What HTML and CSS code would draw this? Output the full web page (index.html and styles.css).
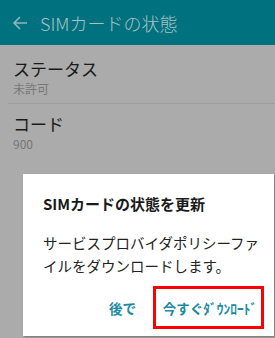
FILE: index.html
```html
<!DOCTYPE html>
<html lang="ja">
<head>
<meta charset="UTF-8">
<meta name="viewport" content="width=device-width, initial-scale=1.0">
<title>SIMカードの状態</title>
<link rel="stylesheet" href="styles.css">
</head>
<body>
<div class="screen">
    <header class="app-bar">
        <svg class="back" width="16" height="16" viewBox="0 0 16 16">
            <path d="M15 8H2M8 2L2 8l6 6" fill="none" stroke="#8fb6bc" stroke-width="1.6"/>
        </svg>
        <span class="app-title">SIMカードの状態</span>
    </header>
    <div class="list">
        <div class="item">
            <div class="item-title">ステータス</div>
            <div class="item-sub">未許可</div>
        </div>
        <div class="item">
            <div class="item-title">コード</div>
            <div class="item-sub">900</div>
        </div>
    </div>

    <div class="dialog">
        <div class="dialog-title">SIMカードの状態を更新</div>
        <div class="dialog-body">サービスプロバイダポリシーファイルをダウンロードします。</div>
        <div class="dialog-actions">
            <button class="action">後で</button>
            <button class="action action-now">今すぐ<span class="half">ﾀﾞｳﾝﾛｰﾄﾞ</span></button>
        </div>
    </div>
</div>
</body>
</html>
```

FILE: styles.css
```css
/* SIM status screen with dimmed dialog */
body {
    margin: 0;
    font-family: "Noto Sans CJK JP", "Noto Sans", sans-serif;
    background-color: #ababab;
}
.screen {
    position: relative;
    width: 275px;
    height: 338px;
    overflow: hidden;
    background-color: #ababab;
}
.app-bar {
    height: 45px;
    background-color: #00717f;
    display: flex;
    align-items: center;
    padding-left: 12px;
}
.back {
    margin-right: 12px;
}
.app-title {
    color: #a9c2c6;
    font-size: 18px;
    font-weight: 300;
}
.list {
    padding: 2px 0 0 8px;
}
.item {
    padding: 10px 0 6px 5px;
    border-bottom: 1px solid #9d9d9d;
}
.item:last-child {
    border-bottom: none;
    padding-top: 8px;
}
.item-title {
    font-size: 17px;
    line-height: 24px;
    color: #1a1a1a;
}
.item-sub {
    font-size: 12px;
    line-height: 16px;
    color: #777777;
}
.dialog {
    position: absolute;
    left: 23px;
    top: 174px;
    width: 251px;
    height: 162px;
    background-color: #ffffff;
    box-shadow: 1px 1px 2px rgba(0, 0, 0, 0.35);
}
.dialog-title {
    font-size: 15px;
    font-weight: bold;
    color: #1a1a1a;
    padding: 20px 8px 0 20px;
    line-height: 20px;
}
.dialog-body {
    font-size: 14.5px;
    color: #222222;
    padding: 17px 8px 0 20px;
    line-height: 23px;
}
.dialog-actions {
    display: flex;
    justify-content: flex-end;
    align-items: center;
    margin-top: 9px;
    padding-right: 10px;
}
.action {
    font-family: inherit;
    background: none;
    border: none;
    color: #1c8aa0;
    font-size: 13.5px;
    font-weight: bold;
    padding: 0;
    height: 43px;
}
.action-now {
    margin-left: 17px;
    width: 111px;
    border: 3px solid #ff0000;
    padding-left: 3px;
}
```
